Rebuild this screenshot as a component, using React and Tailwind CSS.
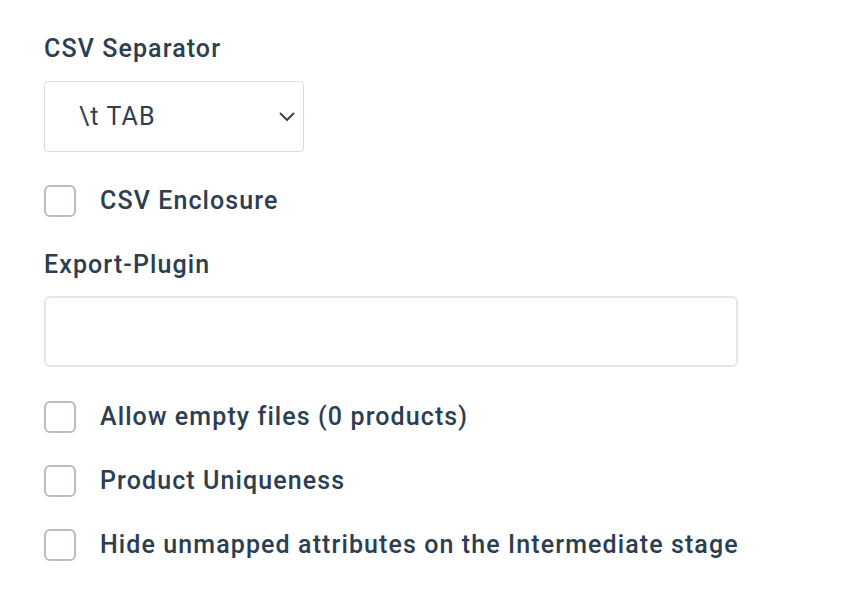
// Export settings form — CSV options and plugin selection.
import { useState } from 'react';

const font = { fontFamily: 'Roboto, "Liberation Sans", sans-serif' };

function Checkbox({ label, checked, onChange }) {
  return (
    <label className="flex items-center gap-6 h-8 cursor-pointer">
      <span className={'w-8 h-8 rounded-md border-2 shrink-0 ' + (checked ? 'bg-[#2c3e50] border-[#2c3e50]' : 'bg-white border-[#b8bec6]')}>
        <input type="checkbox" className="hidden" checked={checked} onChange={onChange} />
      </span>
      <span className="text-[25px] leading-8 font-medium text-[#2c3e50] tracking-[1.1px]">{label}</span>
    </label>
  );
}

export default function App() {
  const [sep, setSep] = useState('\\t TAB');
  const [plugin, setPlugin] = useState('');
  const [flags, setFlags] = useState({ enclosure: false, empty: false, unique: false, hide: false });
  const toggle = k => () => setFlags(f => ({ ...f, [k]: !f[k] }));

  return (
    <div className="min-h-screen bg-white pl-11 pt-8" style={font}>
      <div className="text-[25px] font-medium text-[#2c3e50] tracking-[1.1px] leading-[34px]">CSV Separator</div>
      <div className="mt-[15px] relative w-[260px] h-[71px] border border-[#d8dde3] rounded">
        <select value={sep} onChange={e => setSep(e.target.value)}
                className="appearance-none w-full h-full bg-transparent pl-[34px] pr-10 text-[25px] tracking-[1.1px] text-[#2c3e50] outline-none">
          <option>{'\\t TAB'}</option>
          <option>; Semicolon</option>
          <option>, Comma</option>
        </select>
        <svg className="absolute right-[8px] top-[30px] pointer-events-none" width="16" height="10" viewBox="0 0 16 10" fill="none">
          <path d="M1.5 1.5 L8 8 L14.5 1.5" stroke="#2c3e50" strokeWidth="1.8" strokeLinecap="round" strokeLinejoin="round" />
        </svg>
      </div>

      <div className="mt-[33px]">
        <Checkbox label="CSV Enclosure" checked={flags.enclosure} onChange={toggle('enclosure')} />
      </div>

      <div className="mt-[31px] text-[25px] font-medium text-[#2c3e50] tracking-[1.1px] leading-[34px]">Export-Plugin</div>
      <input value={plugin} onChange={e => setPlugin(e.target.value)}
             className="mt-[14px] block w-[694px] h-[71px] border-2 border-[#e3e7ec] rounded-md px-4 text-[25px] text-[#2c3e50] outline-none" />

      <div className="mt-[34px] flex flex-col gap-8">
        <Checkbox label="Allow empty files (0 products)" checked={flags.empty} onChange={toggle('empty')} />
        <Checkbox label="Product Uniqueness" checked={flags.unique} onChange={toggle('unique')} />
        <Checkbox label="Hide unmapped attributes on the Intermediate stage" checked={flags.hide} onChange={toggle('hide')} />
      </div>
    </div>
  );
}
